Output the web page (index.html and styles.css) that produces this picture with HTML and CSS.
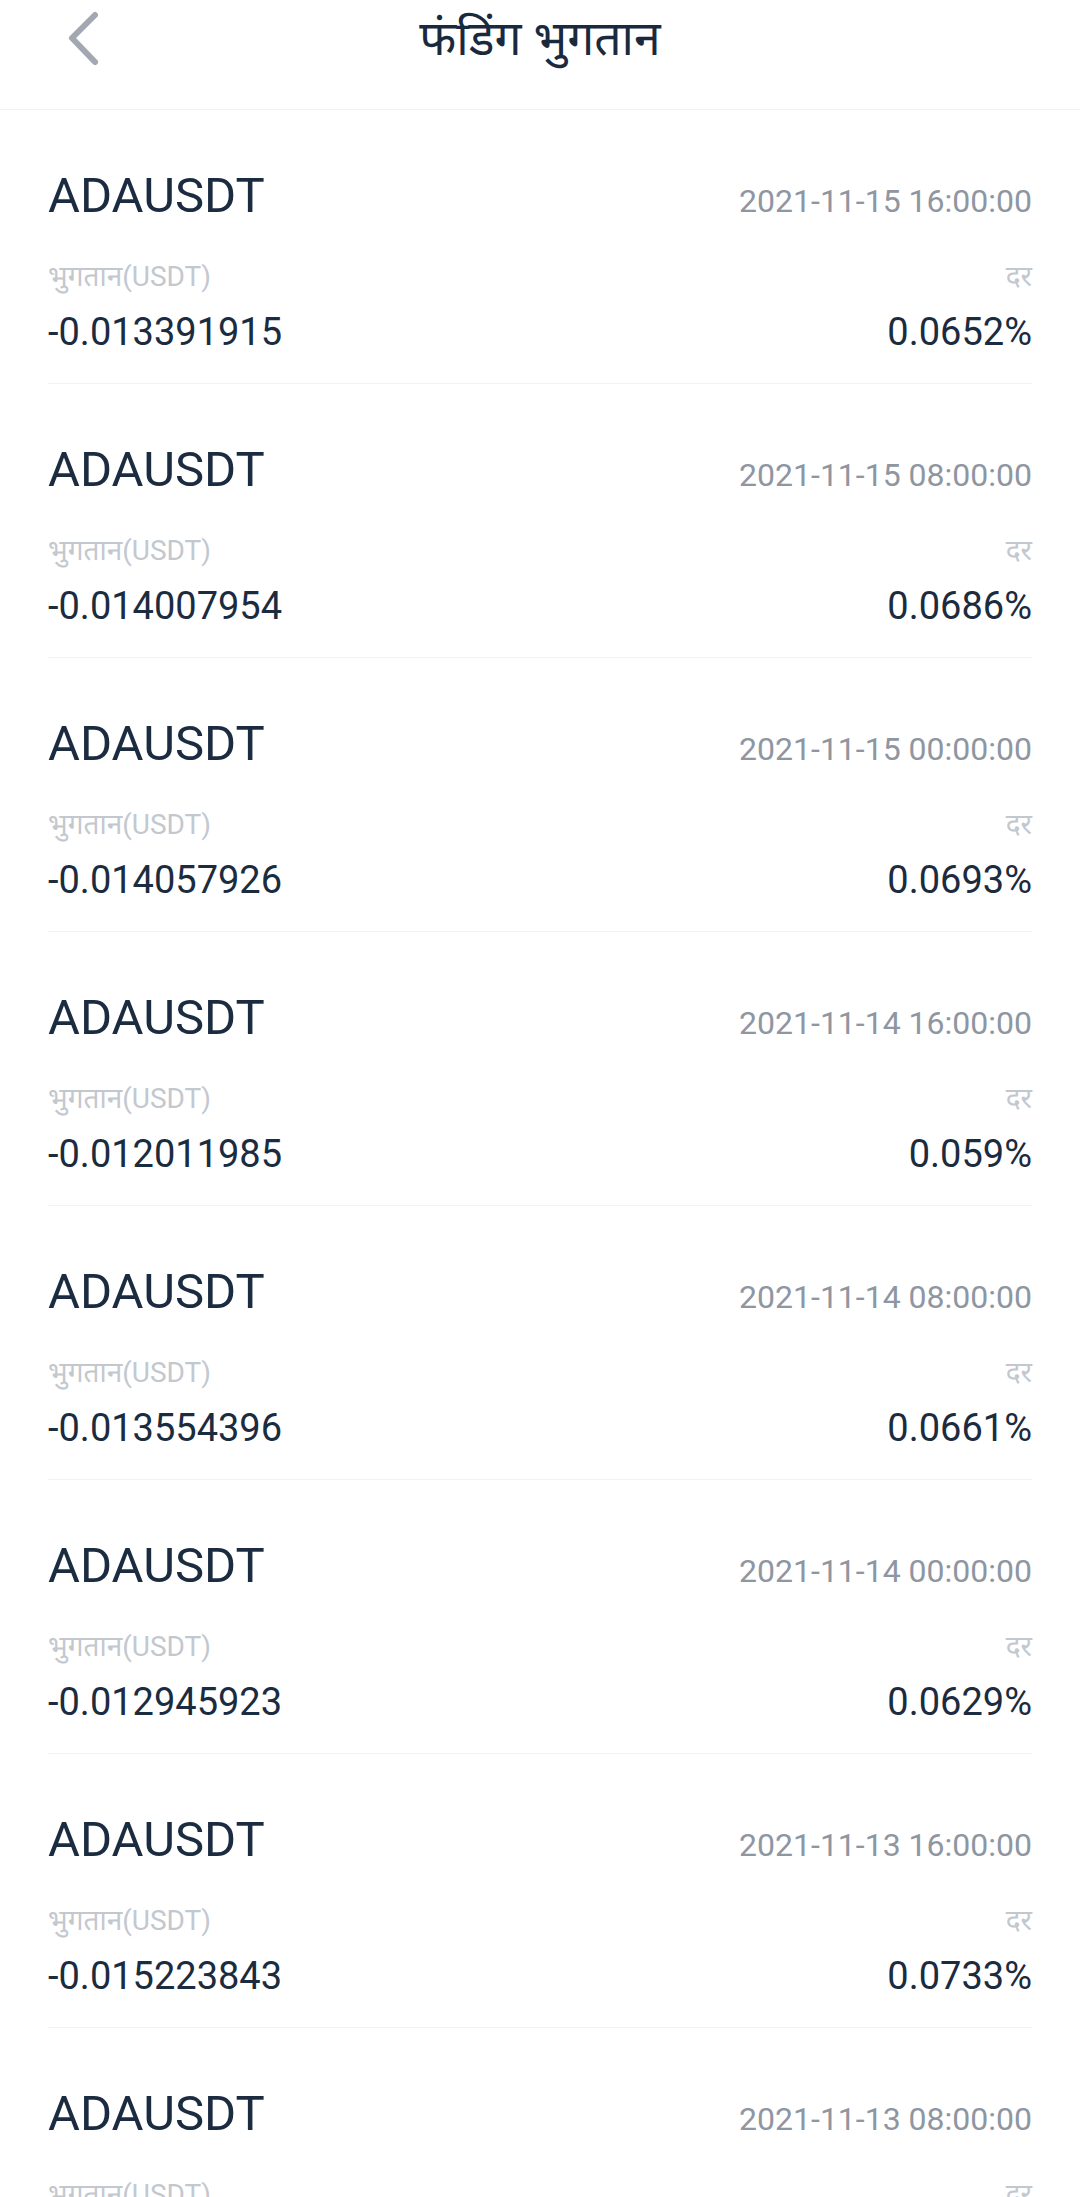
FILE: index.html
```html
<!DOCTYPE html>
<html lang="hi">
<head>
    <meta charset="UTF-8">
    <meta name="viewport" content="width=device-width, initial-scale=1.0">
    <title>फंडिंग भुगतान</title>
    <link rel="stylesheet" href="styles.css">
</head>
<body>
    <div class="header">
        <a href="#" class="back">
            <svg width="40" height="60" viewBox="0 0 40 60">
                <polyline points="28,5 5,28 28,52" fill="none" stroke="#a1a8b2" stroke-width="6" stroke-linecap="round" stroke-linejoin="round"/>
            </svg>
        </a>
        <h1>फंडिंग भुगतान</h1>
        <div></div>
    </div>

    <div class="list">
        <div class="item">
            <div class="line top"><span class="symbol">ADAUSDT</span><span class="time">2021-11-15 16:00:00</span></div>
            <div class="line label"><span>भुगतान(USDT)</span><span>दर</span></div>
            <div class="line value"><span>-0.013391915</span><span>0.0652%</span></div>
        </div>
        <div class="item">
            <div class="line top"><span class="symbol">ADAUSDT</span><span class="time">2021-11-15 08:00:00</span></div>
            <div class="line label"><span>भुगतान(USDT)</span><span>दर</span></div>
            <div class="line value"><span>-0.014007954</span><span>0.0686%</span></div>
        </div>
        <div class="item">
            <div class="line top"><span class="symbol">ADAUSDT</span><span class="time">2021-11-15 00:00:00</span></div>
            <div class="line label"><span>भुगतान(USDT)</span><span>दर</span></div>
            <div class="line value"><span>-0.014057926</span><span>0.0693%</span></div>
        </div>
        <div class="item">
            <div class="line top"><span class="symbol">ADAUSDT</span><span class="time">2021-11-14 16:00:00</span></div>
            <div class="line label"><span>भुगतान(USDT)</span><span>दर</span></div>
            <div class="line value"><span>-0.012011985</span><span>0.059%</span></div>
        </div>
        <div class="item">
            <div class="line top"><span class="symbol">ADAUSDT</span><span class="time">2021-11-14 08:00:00</span></div>
            <div class="line label"><span>भुगतान(USDT)</span><span>दर</span></div>
            <div class="line value"><span>-0.013554396</span><span>0.0661%</span></div>
        </div>
        <div class="item">
            <div class="line top"><span class="symbol">ADAUSDT</span><span class="time">2021-11-14 00:00:00</span></div>
            <div class="line label"><span>भुगतान(USDT)</span><span>दर</span></div>
            <div class="line value"><span>-0.012945923</span><span>0.0629%</span></div>
        </div>
        <div class="item">
            <div class="line top"><span class="symbol">ADAUSDT</span><span class="time">2021-11-13 16:00:00</span></div>
            <div class="line label"><span>भुगतान(USDT)</span><span>दर</span></div>
            <div class="line value"><span>-0.015223843</span><span>0.0733%</span></div>
        </div>
        <div class="item">
            <div class="line top"><span class="symbol">ADAUSDT</span><span class="time">2021-11-13 08:00:00</span></div>
            <div class="line label"><span>भुगतान(USDT)</span><span>दर</span></div>
            <div class="line value"><span>-0.015001208</span><span>0.0722%</span></div>
        </div>
    </div>
</body>
</html>
```

FILE: styles.css
```css
body {
    margin: 0;
    padding: 0;
    font-family: Roboto, "Noto Sans", "Noto Sans Devanagari", sans-serif;
    background: #fff;
    color: #1b2b40;
    height: 2197px;
    overflow: hidden;
}

.header {
    height: 109px;
    border-bottom: 1px solid #f1f2f4;
    display: grid;
    grid-template-columns: 1fr auto 1fr;
    align-items: center;
}

.back {
    display: flex;
    padding-left: 67px;
    padding-bottom: 30px;
}

h1 {
    margin: 0;
    padding-bottom: 36px;
    font-size: 48px;
    font-weight: 400;
    color: #1a2a3e;
}

.list {
    padding: 0 48px;
}

.item {
    padding: 58px 0 27px;
    border-bottom: 1px solid #f2f3f5;
}

.line {
    display: flex;
    justify-content: space-between;
    align-items: baseline;
}

.top {
    height: 56px;
    line-height: 56px;
}

.symbol {
    font-size: 49px;
    color: #1b2b40;
}

.time {
    font-size: 32px;
    color: #8e96a2;
}

.label {
    margin-top: 33px;
    height: 40px;
    line-height: 40px;
    font-size: 28px;
    color: #c3c8cf;
}

.value {
    margin-top: 11px;
    height: 48px;
    line-height: 48px;
    font-size: 38px;
    color: #1b2b40;
}
```
